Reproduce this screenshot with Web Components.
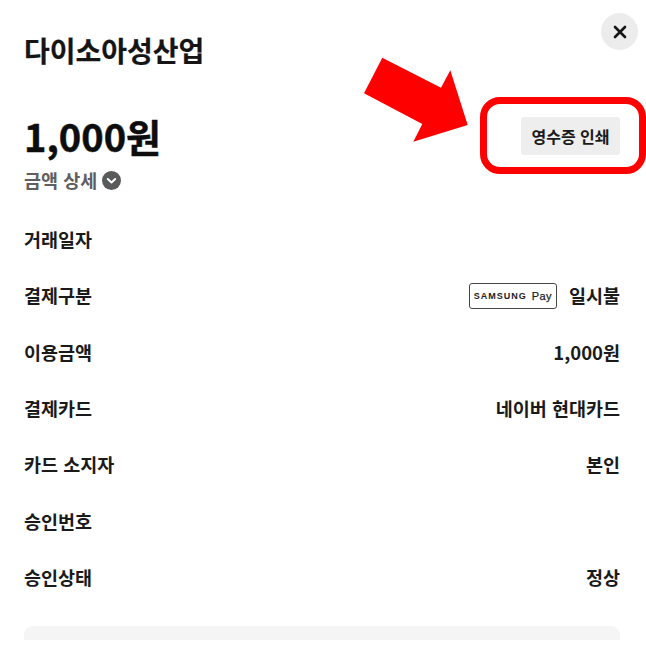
<!DOCTYPE html>
<html lang="ko">
<head>
<meta charset="utf-8">
<title>영수증</title>
<style>
    html, body { margin: 0; padding: 0; background: #fff; }
    body { font-family: "Noto Sans CJK KR", "Noto Sans", sans-serif; color: #111; overflow: hidden; }
</style>
</head>
<body>
<receipt-sheet>
    <receipt-row label="거래일자"></receipt-row>
    <receipt-row label="결제구분"><samsung-badge></samsung-badge>일시불</receipt-row>
    <receipt-row label="이용금액">1,000원</receipt-row>
    <receipt-row label="결제카드">네이버 현대카드</receipt-row>
    <receipt-row label="카드 소지자">본인</receipt-row>
    <receipt-row label="승인번호"></receipt-row>
    <receipt-row label="승인상태">정상</receipt-row>
</receipt-sheet>

<script>
class SamsungBadge extends HTMLElement {
    constructor() {
        super();
        this.attachShadow({ mode: 'open' });
        this.shadowRoot.innerHTML = `
            <style>
                :host {
                    display: inline-flex;
                    box-sizing: border-box;
                    width: 88px;
                    height: 26px;
                    margin-top: 2px;
                    align-items: center;
                    justify-content: center;
                    gap: 5px;
                    border: 1px solid #444;
                    border-radius: 3px;
                    color: #222;
                    font-family: "Liberation Sans", sans-serif;
                    white-space: nowrap;
                }
                .brand { font-size: 9px; font-weight: 700; letter-spacing: 1px; }
                .pay { font-size: 11px; font-weight: 400; letter-spacing: .4px; -webkit-text-stroke: .25px #222; }
            </style>
            <span class="brand">SAMSUNG</span><span class="pay">Pay</span>
        `;
    }
}
customElements.define('samsung-badge', SamsungBadge);

class ReceiptRow extends HTMLElement {
    constructor() {
        super();
        this.attachShadow({ mode: 'open' });
    }

    connectedCallback() {
        const label = this.getAttribute('label');
        this.shadowRoot.innerHTML = `
            <style>
                :host {
                    display: flex;
                    height: 56.3px;
                    align-items: center;
                    justify-content: space-between;
                    font-size: 18.5px;
                    font-weight: 700;
                    color: #1a1a1a;
                }
                .value { display: flex; align-items: center; gap: 12px; }
            </style>
            <span>${label}</span>
            <span class="value"><slot></slot></span>
        `;
    }
}
customElements.define('receipt-row', ReceiptRow);

class ReceiptSheet extends HTMLElement {
    constructor() {
        super();
        this.attachShadow({ mode: 'open' });
        this.shadowRoot.innerHTML = `
            <style>
                :host {
                    display: block;
                    position: relative;
                    box-sizing: border-box;
                    width: 646px;
                    height: 666px;
                    padding: 0 26px 0 24px;
                    overflow: hidden;
                    background: #fff;
                }
                header {
                    display: flex;
                    height: 106px;
                    align-items: flex-start;
                    justify-content: space-between;
                }
                h1 {
                    margin: 31px 0 0;
                    font-size: 28px;
                    line-height: 38px;
                    font-weight: 700;
                    color: #151515;
                    -webkit-text-stroke: .2px #151515;
                }
                .close {
                    display: flex;
                    width: 37px;
                    height: 37px;
                    margin: 13px -18px 0 0;
                    align-items: center;
                    justify-content: center;
                    border-radius: 50%;
                    background: #ececec;
                }
                .summary {
                    display: flex;
                    height: 60px;
                    align-items: center;
                    justify-content: space-between;
                }
                .amount {
                    font-size: 38px;
                    line-height: 50px;
                    font-weight: 700;
                    color: #0d0d0d;
                    -webkit-text-stroke: .5px #0d0d0d;
                }
                .print {
                    display: flex;
                    width: 99px;
                    height: 38px;
                    align-items: center;
                    justify-content: center;
                    border-radius: 3px;
                    background: #eeeeee;
                    font-size: 16px;
                    font-weight: 700;
                    color: #1a1a1a;
                }
                .detail {
                    display: flex;
                    height: 30px;
                    margin-top: -1px;
                    align-items: center;
                    gap: 5px;
                    font-size: 18.5px;
                    font-weight: 700;
                    color: #5f5f5f;
                }
                .rows { margin-top: 16px; }
                .notice {
                    height: 40px;
                    margin-top: 21px;
                    border-radius: 9px 9px 0 0;
                    background: #f5f5f5;
                }
                .fade { position: absolute; left: 0; right: 0; top: 640px; bottom: 0; background: #fff; }
                .arrow { position: absolute; left: 360px; top: 54px; }
                .frame {
                    position: absolute;
                    left: 480px;
                    top: 97px;
                    box-sizing: border-box;
                    width: 166px;
                    height: 77px;
                    border: 7px solid #f00;
                    border-radius: 20px;
                }
            </style>
            <header>
                <h1>다이소아성산업</h1>
                <div class="close">
                    <svg width="14" height="14" viewBox="0 0 14 14" fill="none" stroke="#151515" stroke-width="2.6" stroke-linecap="round">
                        <path d="M2 2L12 12M12 2L2 12"/>
                    </svg>
                </div>
            </header>
            <div class="summary">
                <div class="amount">1,000원</div>
                <div class="print">영수증 인쇄</div>
            </div>
            <div class="detail">
                <span>금액 상세</span>
                <svg width="19" height="19" viewBox="0 0 19 19">
                    <circle cx="9.5" cy="9.5" r="9.5" fill="#5a5a5a"/>
                    <path d="M5.8 8L9.5 11.4L13.2 8" fill="none" stroke="#fff" stroke-width="2" stroke-linecap="round" stroke-linejoin="round"/>
                </svg>
            </div>
            <div class="rows"><slot></slot></div>
            <div class="notice"></div>
            <div class="fade"></div>
            <svg class="arrow" width="112" height="92" viewBox="360 54 112 92">
                <polygon fill="#f00" points="382.3,57.7 441,87.7 450.3,70.3 467.7,125 413.3,141.7 422.3,124 364,93.3"/>
            </svg>
            <div class="frame"></div>
        `;
    }
}
customElements.define('receipt-sheet', ReceiptSheet);
</script>
</body>
</html>
